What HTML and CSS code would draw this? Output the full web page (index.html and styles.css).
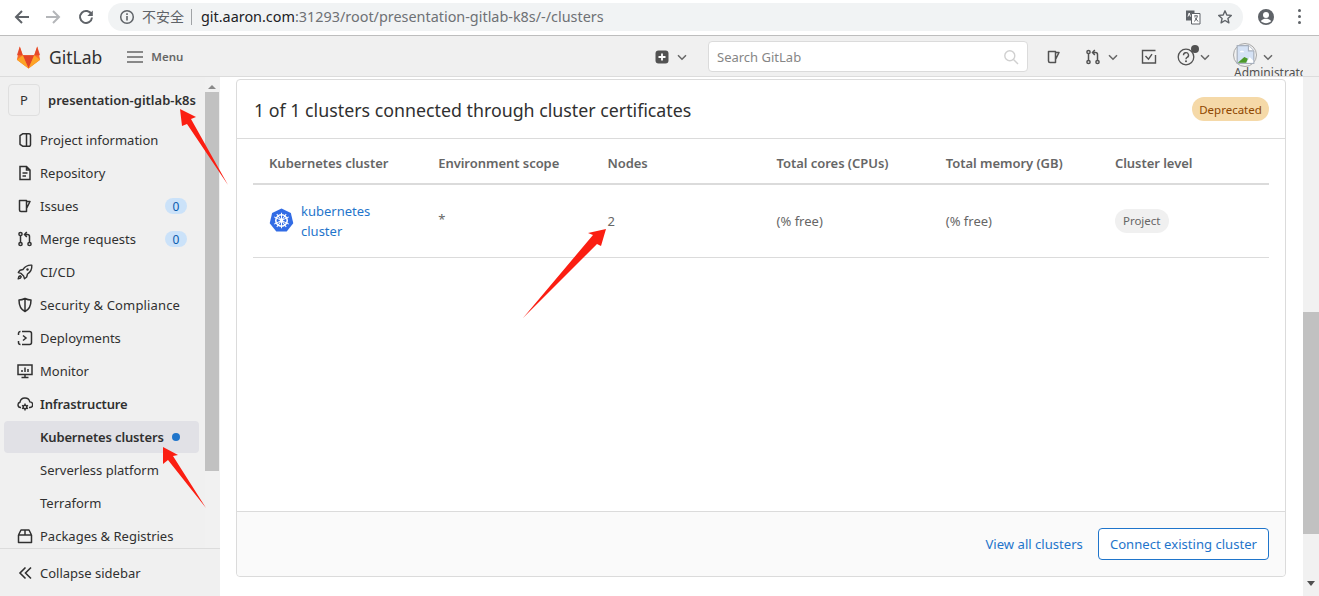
FILE: index.html
```html
<!doctype html>
<html>
<head>
<meta charset="utf-8">
<title>Kubernetes clusters · presentation-gitlab-k8s · GitLab</title>
<link rel="stylesheet" href="styles.css">
</head>
<body>

<svg class="sprites" width="0" height="0">
  <symbol id="i-chevron" viewBox="0 0 10 10"><path d="M1 3.2l4 4 4-4" fill="none" stroke="currentColor" stroke-width="1.5"/></symbol>
  <symbol id="i-issues" viewBox="0 0 16 16"><path d="M2.5 2.5h7v11h-5.500a1.500 1.500 0 0 1-1.500-1.500zM9.500 3.500h3.500l-3.500 7" fill="none" stroke="currentColor" stroke-width="1.500" stroke-linejoin="round"/></symbol>
  <symbol id="i-mr" viewBox="0 0 16 16"><g fill="none" stroke="currentColor" stroke-width="1.500"><circle cx="3.500" cy="3" r="1.600"/><circle cx="3.500" cy="13" r="1.600"/><circle cx="12.500" cy="13" r="1.600"/><path d="M3.500 4.600v6.800M12.500 11.400V5.500a2 2 0 0 0-2-2H8M9.800 1L7.500 3.500 9.800 6"/></g></symbol>
</svg>

<header class="chrome">
  <svg class="chrome-icon" width="16" height="16" viewBox="0 0 16 16"><path d="M15 8H2.500M8 2L2 8l6 6" fill="none" stroke="#5f6368" stroke-width="2"/></svg>
  <svg class="chrome-icon faded" width="16" height="16" viewBox="0 0 16 16"><path d="M1 8h12.500M8 2l6 6-6 6" fill="none" stroke="#b4b6b9" stroke-width="2"/></svg>
  <svg class="chrome-icon" width="16" height="16" viewBox="0 0 16 16"><path d="M13.500 5.500A6 6 0 1 0 14 8.500" fill="none" stroke="#5f6368" stroke-width="2"/><path d="M14.800 1.500v5.500H9.300z" fill="#5f6368"/></svg>
  <div class="omnibox">
    <svg width="16" height="16" viewBox="0 0 16 16"><circle cx="8" cy="8" r="6.300" fill="none" stroke="#5f6368" stroke-width="1.500"/><path d="M7.200 7h1.600v4.500H7.200zM7.200 4.300h1.600v1.600H7.200z" fill="#5f6368"/></svg>
    <span class="insecure">不安全</span>
    <span class="url"><b>git.aaron.com</b>:31293/root/presentation-gitlab-k8s/-/clusters</span>
    <svg class="translate" width="16" height="16" viewBox="0 0 16 16"><path d="M1 1.500h8.500v10H1z" fill="#5f6368"/><path d="M6.500 4.500h8.500v10.500H6.500z" fill="#fff" stroke="#5f6368"/><path d="M9 7h4M11 6v1M9.500 12.500l3-5M10 8.500l3 4" stroke="#5f6368" fill="none"/><path d="M3 7.500l1.200-3.500 1.300 3.500" stroke="#fff" fill="none"/></svg>
    <svg class="star" width="16" height="16" viewBox="0 0 16 16"><path d="M8 1.800l1.800 4.200 4.500.4-3.400 3 1 4.400L8 11.500l-3.900 2.300 1-4.400-3.400-3 4.500-.4z" fill="none" stroke="#5f6368" stroke-width="1.400" stroke-linejoin="round"/></svg>
  </div>
  <svg class="profile" width="18" height="18" viewBox="0 0 18 18"><circle cx="9" cy="9" r="8" fill="#5f6368"/><circle cx="9" cy="7" r="3" fill="#fff"/><path d="M3.800 13c1.500-1.700 3.300-2.300 5.200-2.300s3.700.6 5.200 2.300c-1.300 1.400-3.100 2.200-5.200 2.200S5.100 14.400 3.800 13z" fill="#fff"/></svg>
  <div class="dots"><i></i><i></i><i></i></div>
</header>

<nav class="navbar">
  <a class="brand">
    <svg width="25" height="24" viewBox="0 0 25 24">
      <path d="M12.500 23.500L0.900 14.800 3.800 1.500l3 8.800h11.400l3-8.800 2.900 13.300z" fill="#fc6d26"/>
      <path d="M12.500 23.500L6.800 10.300h11.400z" fill="#e24329"/>
      <path d="M0.900 14.800l5.900-4.500 5.700 13.200z" fill="#fca326"/>
      <path d="M24.100 14.800l-5.900-4.500-5.700 13.200z" fill="#fca326"/>
      <path d="M3.800 1.500l3 8.800H.9z" fill="#e24329" opacity="0.900"/>
      <path d="M21.200 1.500l-3 8.800h5.900z" fill="#e24329" opacity="0.900"/>
    </svg>
    <span>GitLab</span>
  </a>
  <a class="menu-btn">
    <svg width="16" height="16" viewBox="0 0 16 16"><path d="M0 3h16M0 8h16M0 13h16" stroke="#666" stroke-width="1.500"/></svg>
    <span>Menu</span>
  </a>
  <div class="nav-right">
    <a class="nav-item new-item">
      <svg width="14" height="14" viewBox="0 0 14 14"><rect x="0.500" y="0.500" width="13" height="13" rx="3" fill="#525252"/><path d="M7 3.500v7M3.500 7h7" stroke="#fff" stroke-width="1.800"/></svg>
      <svg class="chev"><use href="#i-chevron"/></svg>
    </a>
    <div class="search"><span>Search GitLab</span>
      <svg width="16" height="16" viewBox="0 0 16 16"><circle cx="6.800" cy="6.800" r="5" fill="none" stroke="#d0d0d0" stroke-width="1.400"/><path d="M10.500 10.500L15 15" stroke="#d0d0d0" stroke-width="1.400"/></svg>
    </div>
    <a class="nav-item issues-item"><svg class="ico"><use href="#i-issues"/></svg></a>
    <a class="nav-item mr-item"><svg class="ico"><use href="#i-mr"/></svg><svg class="chev"><use href="#i-chevron"/></svg></a>
    <a class="nav-item todo-item">
      <svg class="ico" viewBox="0 0 16 16"><path d="M14.500 6v8H1.500V1.500h13" fill="none" stroke="currentColor" stroke-width="1.400"/><path d="M4.500 7l3 3.200 3.500-5" fill="none" stroke="currentColor" stroke-width="1.400"/></svg>
    </a>
    <a class="nav-item help-item">
      <svg class="ico help-ico" viewBox="0 0 18 18"><circle cx="9" cy="9" r="7.800" fill="none" stroke="currentColor" stroke-width="1.300"/><path d="M6.500 7.200a2.500 2.500 0 1 1 3.600 2.200c-.8.400-1.100.9-1.100 1.800" fill="none" stroke="currentColor" stroke-width="1.400"/><circle cx="9" cy="13.300" r="1" fill="currentColor"/></svg>
      <i class="help-dot"></i>
      <svg class="chev"><use href="#i-chevron"/></svg>
    </a>
    <a class="nav-item user-item">
      <span class="avatar">
        <svg width="19" height="19" viewBox="0 0 16 16"><path d="M1 .5h9.500l4.500 4.500v10.500H1z" fill="#d5e2f5" stroke="#a8b0bd"/><path d="M10.500.5V5H15" fill="#fff" stroke="#a8b0bd"/><path d="M1.500 15l5.500-5 3 1.500-1.500 3.500z" fill="#4c9a2a"/><path d="M9 15l2.500-5 3 3v2z" fill="#fff"/><path d="M3 6c1-1.500 3-1.500 4 0z" fill="#fff"/></svg>
      </span>
      <svg class="chev"><use href="#i-chevron"/></svg>
      <span class="user-name">Administrator</span>
    </a>
  </div>
</nav>

<div class="layout">
  <aside class="sidebar">
    <div class="side-col">
      <div class="side-scroll">
        <div class="context">
          <span class="context-avatar">P</span>
          <span class="context-name">presentation-gitlab-k8s</span>
        </div>
        <ul class="side-list">
          <li><svg class="ico" viewBox="0 0 16 16"><path d="M6 1.700h6A1.500 1.500 0 0 1 13.500 3.200v9.600a1.500 1.500 0 0 1-1.500 1.500H6L3 12.300V3.700zM9.500 2v12" fill="none" stroke="currentColor" stroke-width="1.500" stroke-linejoin="round"/></svg>Project information</li>
          <li><svg class="ico" viewBox="0 0 16 16"><path d="M3 1.500h6.500l3.500 3.500v9.500H3zM9.500 1.500V5H13M5.500 8h5M5.500 11h3.500" fill="none" stroke="currentColor" stroke-width="1.500"/></svg>Repository</li>
          <li><svg class="ico"><use href="#i-issues"/></svg>Issues<span class="count">0</span></li>
          <li><svg class="ico"><use href="#i-mr"/></svg>Merge requests<span class="count">0</span></li>
          <li><svg class="ico" viewBox="0 0 16 16"><path d="M14.800 1.200c-4-.3-6.600 1-8.800 4.300l-3 .8L1.300 8.500l2.800.9 2.500 2.500.9 2.800 2.200-1.700.8-3c3.300-2.200 4.600-4.800 4.300-8.800zM1.200 14.800c.2-1.700.9-2.800 2-3l1 1c-.2 1.100-1.300 1.800-3 2z" fill="none" stroke="currentColor" stroke-width="1.400" stroke-linejoin="round"/><circle cx="10.500" cy="5.500" r="1.200" fill="currentColor"/></svg>CI/CD</li>
          <li><svg class="ico" viewBox="0 0 16 16"><path d="M8 1.500c2 1 4 1.500 6 1.500 0 5.500-1.800 9.500-6 11.500C3.800 12.500 2 8.500 2 3c2 0 4-.5 6-1.500zM8 2v12" fill="none" stroke="currentColor" stroke-width="1.500" stroke-linejoin="round"/></svg><span class="wide">Security &amp; Compliance</span></li>
          <li><svg class="ico" viewBox="0 0 16 16"><path d="M5 1.500h7.500a2 2 0 0 1 2 2v9a2 2 0 0 1-2 2H5M1.500 5V3.500a2 2 0 0 1 2-2M1.500 11v1.500a2 2 0 0 0 2 2" fill="none" stroke="currentColor" stroke-width="1.500"/><path d="M6 5.500L9 8l-3 2.500" fill="none" stroke="currentColor" stroke-width="1.500"/></svg>Deployments</li>
          <li><svg class="ico" viewBox="0 0 16 16"><path d="M1 2h14v9.500H1zM8 11.500v3M4.500 14.500h7" fill="none" stroke="currentColor" stroke-width="1.500"/><path d="M5 9V7M8 9V4.500M11 9V6" stroke="currentColor" stroke-width="1.500"/></svg>Monitor</li>
          <li class="section-open"><svg class="ico" viewBox="0 0 16 16"><path d="M4 11.500H3.500a2.700 2.700 0 0 1-.5-5.300 5 5 0 0 1 9.800-.3 2.800 2.800 0 0 1 .2 5.600H12" fill="none" stroke="currentColor" stroke-width="1.400"/><circle cx="8" cy="11" r="1.800" fill="none" stroke="currentColor" stroke-width="1.400"/><path d="M8 7.500v1.700M8 12.800v1.700M5 9.300l1.400.8M11 12.700l-1.400-.8M11 9.300l-1.400.8M5 12.700l1.400-.8" stroke="currentColor" stroke-width="1.400"/></svg>Infrastructure</li>
          <li class="sub active">Kubernetes clusters<i class="active-dot"></i></li>
          <li class="sub">Serverless platform</li>
          <li class="sub">Terraform</li>
          <li><svg class="ico" viewBox="0 0 16 16"><path d="M1.500 7h13v7.500h-13zM1.500 7l2.500-5h8l2.500 5M8 2v5" fill="none" stroke="currentColor" stroke-width="1.500" stroke-linejoin="round"/></svg>Packages &amp; Registries</li>
        </ul>
      </div>
      <div class="collapse">
        <svg class="ico" viewBox="0 0 16 16"><path d="M7.500 2.500L2 8l5.500 5.500M13 2.500L7.500 8l5.500 5.500" fill="none" stroke="currentColor" stroke-width="1.600"/></svg>Collapse sidebar
      </div>
    </div>
    <div class="scrollbar side-bar">
      <i class="arrow-up"></i>
      <div class="thumb"></div>
    </div>
  </aside>

  <main class="content">
    <section class="card">
      <div class="card-head">
        <h2>1 of 1 clusters connected through cluster certificates</h2>
        <span class="pill pill-warn">Deprecated</span>
      </div>
      <div class="card-body">
        <table class="clusters">
          <thead>
            <tr>
              <th>Kubernetes cluster</th>
              <th>Environment scope</th>
              <th>Nodes</th>
              <th>Total cores (CPUs)</th>
              <th>Total memory (GB)</th>
              <th>Cluster level</th>
            </tr>
          </thead>
          <tbody>
            <tr>
              <td>
                <div class="cluster-name">
                  <svg width="25" height="25" viewBox="0 0 24 24">
                    <path d="M12 .5l9 4.300 2.300 9.800-6.300 7.900H7L.7 14.600 3 4.800z" fill="#326ce5"/>
                    <g fill="none" stroke="#fff">
                      <circle cx="12" cy="12" r="5.500" stroke-width="1.500"/>
                      <path d="M12 4.500v15M5 8.500l14 7M19 8.500l-14 7M7.500 5.800l9 12.400M16.500 5.800l-9 12.400" stroke-width="1"/>
                    </g>
                    <circle cx="12" cy="12" r="1.500" fill="#fff"/>
                  </svg>
                  <a>kubernetes cluster</a>
                </div>
              </td>
              <td class="scope">*</td>
              <td>2</td>
              <td>(% free)</td>
              <td>(% free)</td>
              <td><span class="pill pill-muted">Project</span></td>
            </tr>
          </tbody>
        </table>
      </div>
      <div class="card-foot">
        <a class="foot-link">View all clusters</a>
        <a class="btn-outline">Connect existing cluster</a>
      </div>
    </section>
  </main>

  <div class="scrollbar main-bar">
    <div class="thumb"></div>
    <i class="arrow-down"></i>
  </div>
</div>

<!-- red annotation arrows drawn over the screenshot -->
<svg class="marks" width="1319" height="596" viewBox="0 0 1319 596">
  <path d="M180 109L196 117 191 119 228 185 187 124 182 126z" fill="#fb1e12"/>
  <path d="M163 447L178 455 173 456 206 508 168 460 163 464z" fill="#fb1e12"/>
  <path d="M606 229L588 233 593 235 523 318 597 244 601 246z" fill="#fb1e12"/>
</svg>

</body>
</html>
```

FILE: styles.css
```css
* {
    box-sizing: border-box;
}
html, body {
    margin: 0;
    height: 596px;
    overflow: hidden;
}
body {
    position: relative;
    display: flex;
    flex-direction: column;
    font-family: "Noto Sans", "Noto Sans CJK SC", sans-serif;
    font-size: 13px;
    color: #303030;
    background: #fff;
}
a {
    text-decoration: none;
}
ul {
    list-style: none;
    margin: 0;
    padding: 0;
}
.sprites {
    position: absolute;
}

/* browser toolbar */
.chrome {
    display: flex;
    align-items: center;
    height: 36px;
    padding: 0 0 2px 14px;
    background: #fff;
    border-bottom: 1px solid #bdbdbd;
    flex: none;
}
.chrome-icon {
    margin-right: 15px;
}
.chrome-icon.faded {
    margin-right: 17px;
}
.omnibox {
    display: flex;
    align-items: center;
    width: 1135px;
    height: 28px;
    margin-left: -1px;
    padding: 0 10px 0 11px;
    background: #f1f3f4;
    border-radius: 14px;
}
.insecure {
    margin-left: 7px;
    padding-right: 7px;
    border-right: 1px solid #a0a3a6;
    font-size: 14px;
    line-height: 16px;
    color: #5f6368;
}
.url {
    margin-left: 9px;
    font-size: 14.4px;
    color: #6e7175;
}
.url b {
    font-weight: normal;
    color: #202124;
}
.translate {
    margin-left: auto;
}
.star {
    margin-left: 16px;
}
.profile {
    margin-left: 14px;
}
.dots {
    display: flex;
    flex-direction: column;
    gap: 3px;
    margin-left: 23px;
}
.dots i {
    width: 3px;
    height: 3px;
    border-radius: 50%;
    background: #5f6368;
}

/* gitlab top bar */
.navbar {
    display: flex;
    align-items: center;
    height: 41px;
    padding: 1px 16px 0 16px;
    background: #f0f0f0;
    border-bottom: 1px solid #dcdcdc;
    flex: none;
}
.brand {
    display: flex;
    align-items: center;
    gap: 8px;
    font-size: 17.5px;
    color: #303030;
}
.menu-btn {
    display: flex;
    align-items: center;
    gap: 8px;
    margin-left: 25px;
    font-size: 11.5px;
    font-weight: 600;
    color: #666;
}
.nav-right {
    display: flex;
    align-items: center;
    margin-left: auto;
    height: 100%;
}
.nav-item {
    display: flex;
    align-items: center;
    color: #525252;
}
.ico {
    width: 16px;
    height: 16px;
    flex: none;
}
.chev {
    width: 10px;
    height: 10px;
    margin-left: 8px;
    color: #666;
}
.search {
    display: flex;
    align-items: center;
    justify-content: space-between;
    width: 320px;
    height: 31px;
    margin-left: 21px;
    padding: 0 8px;
    background: #fff;
    border: 1px solid #dbdbdb;
    border-radius: 4px;
    font-size: 13px;
    color: #868686;
}
.issues-item {
    margin-left: 18px;
}
.mr-item {
    margin-left: 23px;
}
.mr-item .chev {
    margin-left: 7px;
}
.todo-item {
    margin-left: 23px;
}
.help-item {
    position: relative;
    margin-left: 20px;
}
.help-ico {
    width: 18px;
    height: 18px;
}
.help-dot {
    position: absolute;
    left: 14px;
    top: -3px;
    width: 8px;
    height: 8px;
    border-radius: 50%;
    background: #525252;
}
.help-item .chev {
    margin-left: 5px;
}
.user-item {
    position: relative;
    width: 70px;
    margin-left: 23px;
    overflow: hidden;
    height: 100%;
}
.avatar {
    display: flex;
    align-items: center;
    justify-content: center;
    width: 24px;
    height: 24px;
    margin-bottom: 4px;
    border: 1px solid #a8a8a8;
    border-radius: 50%;
    flex: none;
}
.user-item .chev {
    margin-left: 6px;
}
.user-name {
    position: absolute;
    left: 1px;
    top: 27px;
    font-size: 12px;
    color: #525252;
    white-space: nowrap;
}

/* page below the top bar */
.layout {
    display: flex;
    flex: 1;
    min-height: 0;
}
.sidebar {
    display: flex;
    width: 220px;
    background: #f0f0f0;
    flex: none;
}
.side-col {
    display: flex;
    flex-direction: column;
    width: 205px;
    flex: none;
}
.side-scroll {
    flex: 1;
    min-height: 0;
    overflow: hidden;
    padding-left: 4px;
}
.context {
    display: flex;
    align-items: center;
    gap: 8px;
    height: 47px;
    padding: 0 0 1px 4px;
}
.context-avatar {
    display: flex;
    align-items: center;
    justify-content: center;
    width: 32px;
    height: 32px;
    background: #f0f0f0;
    border: 1px solid #dfdfdf;
    border-radius: 4px;
    font-size: 13px;
    color: #303030;
    flex: none;
}
.context-name {
    font-weight: 600;
    white-space: nowrap;
}
.side-list {
    width: 195px;
}
.side-list li {
    display: flex;
    align-items: center;
    gap: 7px;
    height: 32px;
    margin-bottom: 1px;
    padding-left: 13px;
    border-radius: 4px;
    white-space: nowrap;
}
.side-list .sub {
    padding-left: 36px;
}
.wide {
    letter-spacing: 0.15px;
}
.section-open {
    font-weight: 600;
    letter-spacing: -0.15px;
}
.side-list .active {
    background: #e1e1e6;
    font-weight: 600;
    letter-spacing: -0.15px;
    gap: 8px;
}
.active-dot {
    width: 8px;
    height: 8px;
    border-radius: 50%;
    background: #1f75cb;
}
.count {
    display: flex;
    align-items: center;
    justify-content: center;
    width: 22px;
    height: 16px;
    margin-left: auto;
    margin-right: 12px;
    border-radius: 8px;
    background: #cbe2f9;
    font-size: 12px;
    color: #0b5cad;
}
.collapse {
    display: flex;
    align-items: center;
    gap: 6px;
    height: 48px;
    padding-left: 18px;
    margin-right: -15px;
    border-top: 1px solid #dcdcdc;
    background: #f0f0f0;
    position: relative;
}

/* scrollbars */
.scrollbar {
    display: flex;
    flex-direction: column;
    flex: none;
    background: #f1f1f1;
}
.side-bar {
    width: 15px;
    height: 471px;
    padding-top: 8px;
}
.side-bar .thumb {
    height: 379px;
    margin-top: 3px;
    background: #c1c1c1;
    width: 14px;
}
.main-bar {
    width: 16px;
    padding-top: 235px;
}
.main-bar .thumb {
    height: 222px;
    background: #c1c1c1;
}
.arrow-up {
    width: 0;
    height: 0;
    margin-left: 3px;
    border: 4px solid transparent;
    border-top: 0;
    border-bottom: 4px solid #8a8a8a;
    display: block;
}
.arrow-down {
    width: 0;
    height: 0;
    margin: 47px 0 0 4px;
    border: 4px solid transparent;
    border-bottom: 0;
    border-top: 5px solid #505050;
    display: block;
}

/* main card */
.content {
    flex: 1;
    min-width: 0;
    padding: 2px 17px 19px 16px;
}
.card {
    display: flex;
    flex-direction: column;
    height: 100%;
    border: 1px solid #dbdbdb;
    border-radius: 4px;
    background: #fff;
}
.card-head {
    display: flex;
    align-items: center;
    justify-content: space-between;
    height: 59px;
    padding: 0 16px 0 17px;
    border-bottom: 1px solid #dbdbdb;
    flex: none;
}
.card-head h2 {
    margin: 2px 0 0;
    font-size: 17.8px;
    font-weight: 400;
    color: #303030;
}
.pill {
    display: inline-flex;
    align-items: center;
    justify-content: center;
    height: 24px;
    padding: 0 8px;
    border-radius: 12px;
    font-size: 11.5px;
}
.card-body {
    flex: 1;
    padding: 0 16px;
}
.pill-warn {
    width: 77px;
    background: #f5d9a8;
    color: #8f4700;
}
.pill-muted {
    background: #f0f0f0;
    color: #666;
}
.clusters {
    width: 100%;
    border-collapse: collapse;
    table-layout: fixed;
    color: #666;
}
.clusters th {
    height: 45px;
    padding: 4px 16px 0;
    text-align: left;
    font-weight: 600;
    letter-spacing: -0.04px;
    border-bottom: 2px solid #dbdbdb;
}
.clusters th:nth-child(-n+5) {
    width: 169.2px;
}
.clusters td {
    height: 73px;
    padding: 0 16px;
    border-bottom: 1px solid #dbdbdb;
}
.clusters .scope {
    padding-bottom: 4px;
}
.cluster-name {
    display: flex;
    align-items: center;
    gap: 7px;
    line-height: 20px;
}
.cluster-name svg {
    flex: none;
}
.cluster-name a,
.foot-link,
.btn-outline {
    color: #1f75cb;
}
.card-foot {
    display: flex;
    align-items: center;
    justify-content: flex-end;
    gap: 15px;
    height: 65px;
    padding: 0 16px;
    background: #fafafa;
    border-top: 1px solid #dbdbdb;
    border-radius: 0 0 4px 4px;
    font-size: 13.1px;
    flex: none;
}
.btn-outline {
    display: flex;
    align-items: center;
    height: 32px;
    padding: 0 11px;
    background: #fff;
    border: 1px solid #1f75cb;
    border-radius: 4px;
}

/* annotations */
.marks {
    position: absolute;
    left: 0;
    top: 0;
    pointer-events: none;
}
```
